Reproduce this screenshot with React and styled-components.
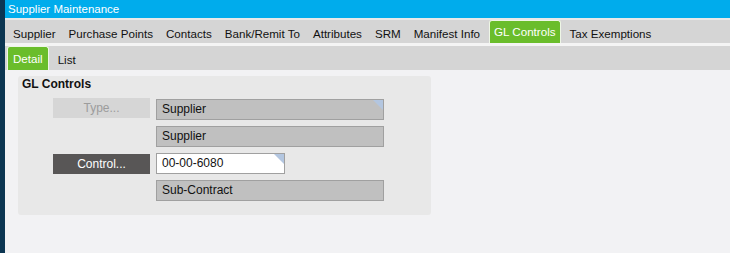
import React from "react";
import styled, { createGlobalStyle } from "styled-components";

const GlobalStyle = createGlobalStyle`
  html, body {
    margin: 0;
    padding: 0;
    background: #f2f2f4;
    font-family: "Liberation Sans", Arial, sans-serif;
    font-size: 12px;
  }
`;

const Shell = styled.div`
  display: flex;
  height: 253px;
  overflow: hidden;
`;

const EdgeStrip = styled.div`
  width: 5px;
  flex: none;
  background: #0c3652;
`;

const Main = styled.div`
  flex: 1;
  display: flex;
  flex-direction: column;
  background: #f2f2f4;
`;

const TitleBar = styled.div`
  height: 18px;
  line-height: 18px;
  padding-left: 3px;
  background: #00acec;
  color: #fff;
  font-size: 11.5px;
`;

const Rule = styled.div`
  height: ${(props) => props.size}px;
  background: ${(props) => props.color};
`;

const TabBar = styled.div`
  display: flex;
  align-items: stretch;
  gap: 5px;
  height: ${(props) => props.height}px;
  padding-left: ${(props) => props.inset}px;
  background: #d5d5d5;
`;

const Tab = styled.div`
  display: flex;
  align-items: center;
  padding: 3px ${(props) => props.pad}px 0;
  font-size: 11.6px;
  color: #111;
  white-space: nowrap;
  box-sizing: border-box;

  ${(props) =>
    props.active &&
    `
    background: #6abd2b;
    color: #fff;
    border: 1px solid #eef6e6;
    border-bottom: none;
    border-radius: 3px 3px 0 0;
    padding-top: 0;
    padding-bottom: 1px;
  `}
`;

const Content = styled.div`
  padding: 6px 0 0 13px;
`;

const Panel = styled.div`
  width: 413px;
  height: 139px;
  box-sizing: border-box;
  padding: 1px 0 0 4px;
  background: #e8e8e8;
  border-radius: 3px;
`;

const PanelHeading = styled.div`
  font-weight: bold;
  line-height: 14px;
  color: #111;
`;

const Form = styled.div`
  display: grid;
  grid-template-columns: 97px auto;
  column-gap: 6px;
  row-gap: 6px;
  margin: 8px 0 0 31px;
  align-items: start;
`;

const ActionButton = styled.div`
  height: 20px;
  line-height: 20px;
  margin-top: ${(props) => (props.dark ? 1 : -1)}px;
  text-align: center;
  background: ${(props) => (props.dark ? "#585656" : "#d6d6d6")};
  color: ${(props) => (props.dark ? "#fff" : "#9c9c9c")};
`;

const Field = styled.div`
  grid-column: 2;
  position: relative;
  width: ${(props) => props.width}px;
  height: 21px;
  line-height: 19px;
  box-sizing: border-box;
  padding-left: 5px;
  border: 1px solid #a0a0a0;
  background: ${(props) => (props.editable ? "#fff" : "#c0c0c0")};
  color: #111;

  ${(props) =>
    props.flagged &&
    `
    &::after {
      content: "";
      position: absolute;
      top: 0;
      right: 0;
      border-top: 10px solid #b3c6e0;
      border-left: 10px solid transparent;
    }
  `}
`;

const mainTabs = [
  "Supplier",
  "Purchase Points",
  "Contacts",
  "Bank/Remit To",
  "Attributes",
  "SRM",
  "Manifest Info",
  "GL Controls",
  "Tax Exemptions",
];

export default function App() {
  return (
    <>
      <GlobalStyle />
      <Shell>
        <EdgeStrip />
        <Main>
          <TitleBar>Supplier Maintenance</TitleBar>
          <Rule size={2} color="#e9e9e9" />
          <TabBar height={23} inset={4}>
            {mainTabs.map((t) => (
              <Tab key={t} pad={4} active={t === "GL Controls"}>
                {t}
              </Tab>
            ))}
          </TabBar>
          <Rule size={3} color="#f4f4f4" />
          <TabBar height={24} inset={2}>
            <Tab pad={5} active>
              Detail
            </Tab>
            <Tab pad={4}>List</Tab>
          </TabBar>
          <Content>
            <Panel>
              <PanelHeading>GL Controls</PanelHeading>
              <Form>
                <ActionButton>Type...</ActionButton>
                <Field width={228} flagged>
                  Supplier
                </Field>
                <Field width={228}>Supplier</Field>
                <ActionButton dark>Control...</ActionButton>
                <Field width={129} editable flagged>
                  00-00-6080
                </Field>
                <Field width={228}>Sub-Contract</Field>
              </Form>
            </Panel>
          </Content>
        </Main>
      </Shell>
    </>
  );
}
